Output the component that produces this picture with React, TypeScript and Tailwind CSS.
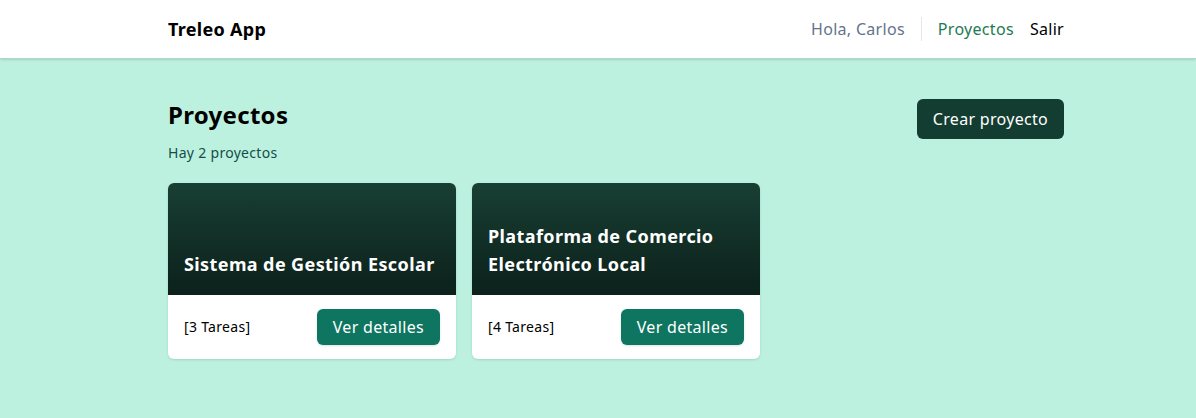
const projects = [
  { id: 1, name: "Sistema de Gestión Escolar", tasks: 3 },
  { id: 2, name: "Plataforma de Comercio Electrónico Local", tasks: 4 },
];

const ProjectCard = ({ name, tasks }: { name: string; tasks: number }) => (
  <div className="bg-white rounded-md shadow-sm overflow-hidden">
    <div className="h-[112px] flex items-end px-4 pb-[17px] bg-gradient-to-b from-[#183f33] to-[#0c211b]">
      <h2 className="text-white font-bold text-lg leading-7 tracking-[0.4px]">{name}</h2>
    </div>
    <div className="h-16 flex items-center justify-between px-4">
      <span className="text-sm text-black">[{tasks} Tareas]</span>
      <button className="h-9 px-4 rounded-md bg-[#0d7560] text-white text-base shadow-sm">
        Ver detalles
      </button>
    </div>
  </div>
);

export default function App() {
  return (
    <div
      className="min-h-[418px] bg-[#bdf1df] tracking-[0.3px]"
      style={{ fontFamily: '"Noto Sans", sans-serif' }}
    >
      <header className="h-[59px] bg-white border-b border-[#a9d9c7] shadow-sm">
        <div className="ml-[168px] w-[896px] h-full flex items-center justify-between">
          <span className="text-lg font-bold text-black">Treleo App</span>
          <nav className="flex items-center text-base">
            <span className="text-[#64748b] pr-4">Hola, Carlos</span>
            <span className="h-6 w-px bg-gray-200" />
            <span className="text-[#1e7a55] pl-4 pr-4">Proyectos</span>
            <span className="text-black">Salir</span>
          </nav>
        </div>
      </header>
      <main className="ml-[168px] w-[896px] pt-10">
        <div className="flex items-start justify-between">
          <div>
            <h1 className="text-2xl font-bold text-black">Proyectos</h1>
            <p className="text-sm text-[#134e4a] mt-3">Hay {projects.length} proyectos</p>
          </div>
          <button className="h-10 px-4 rounded-md bg-[#143d31] text-white text-base">
            Crear proyecto
          </button>
        </div>
        <div className="grid grid-cols-3 gap-4 mt-5">
          {projects.map((p) => (
            <ProjectCard key={p.id} name={p.name} tasks={p.tasks} />
          ))}
        </div>
      </main>
    </div>
  );
}
